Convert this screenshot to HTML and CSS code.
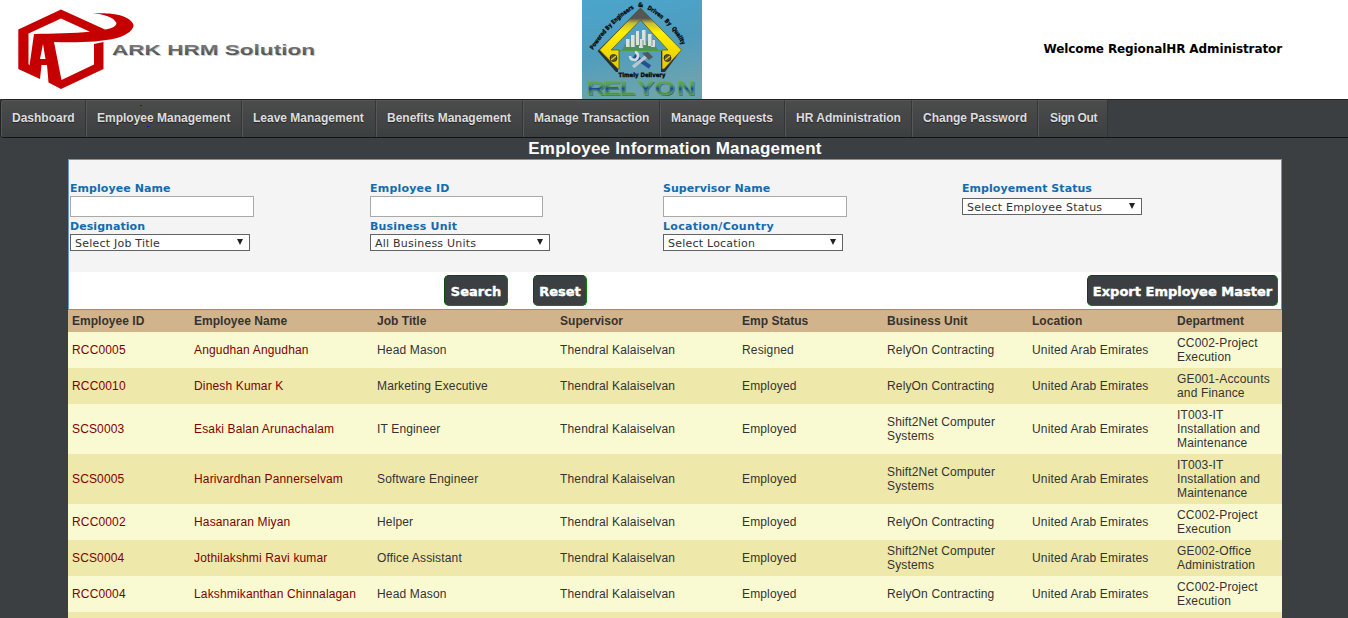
FILE: index.html
```html
<!DOCTYPE html>
<html lang="en">
<head>
<meta charset="utf-8">
<title>Employee Information Management</title>
<link rel="stylesheet" href="styles.css">
</head>
<body>
<header class="banner">
  <svg class="ark-logo" width="330" height="99" viewBox="0 0 330 99">
    <defs>
      <linearGradient id="metal" x1="0" y1="0" x2="0" y2="1"><stop offset="0" stop-color="#888"/><stop offset=".5" stop-color="#686868"/><stop offset="1" stop-color="#444"/></linearGradient>
    </defs>
    <path fill="#c60000" d="M61 9.5 18.3 29.5V69L40 79 41.5 65H47L48.5 82.500 61 89 103.500 69V42L94 44V64.500L61.500 80 54 42C75 42.500 99 42.500 117 38C128 35 134 29 133.500 25C131 15 110 12 93 13.500C103 14 114 17 116.500 23C116 27 110 29 105 29.500Z"/>
    <path fill="#fff" d="M61 18.500 90 31.800C74 33.500 52 33.500 34 34L29.500 65.500 28.500 64V33.500ZM43 44 45.500 59H40Z"/>
    <text class="ark-shadow" x="113" y="56" textLength="203" lengthAdjust="spacingAndGlyphs">ARK HRM Solution</text>
    <text class="ark-name" x="112" y="55" textLength="203" lengthAdjust="spacingAndGlyphs">ARK HRM Solution</text>
  </svg>
  <svg class="relyon-logo" width="120" height="99" viewBox="0 0 120 99">
    <defs>
      <linearGradient id="sky" x1="0" y1="0" x2=".25" y2="1"><stop offset="0" stop-color="#4ba5cc"/><stop offset=".55" stop-color="#4f9dbe"/><stop offset="1" stop-color="#6ca3af"/></linearGradient>
      <linearGradient id="yellow" x1="0" y1="0" x2="0" y2="1"><stop offset="0" stop-color="#555"/><stop offset=".17" stop-color="#555"/><stop offset=".25" stop-color="#c9bd31"/><stop offset=".4" stop-color="#fff000"/><stop offset="1" stop-color="#e5c900"/></linearGradient>
      <linearGradient id="letters" x1="0" y1="0" x2="0" y2="1"><stop offset="0" stop-color="#75b34b"/><stop offset=".35" stop-color="#4b9b67"/><stop offset=".5" stop-color="#184b93"/><stop offset=".65" stop-color="#3a8570"/><stop offset="1" stop-color="#75b34b"/></linearGradient>
      <path id="left-arc" d="M11 50Q28 23 54 7"/>
      <path id="right-arc" d="M65 9Q90 23 101 47"/>
    </defs>
    <rect width="120" height="99" fill="url(#sky)"/>
    <path d="M58.500 8 16.500 50 35 71H37V50H26L58.500 18 89 50H80V71H84L99.500 50Z" fill="#263039" transform="translate(-1 1)"/>
    <path d="M58.500 8 17.500 50 36 69H37V50H29L58.500 20 86 50H80V69H82L99.500 50Z" fill="url(#yellow)" stroke="#514e23" stroke-width=".7"/>
    <g fill="#5c5724" stroke="#222" stroke-width=".8"><circle cx="31.500" cy="58" r="3.500"/><circle cx="85.500" cy="58" r="3.500"/></g>
    <path d="M29 60 34 56M83 60 88 56" stroke="#e8cf28" stroke-width="1.300"/>
    <path fill="#4e9060" d="M45 41H71L76 50H40Z"/>
    <path fill="#d9e2dd" d="M44 39h4v8h-4zM49 35h4v12h-4zM54 31h3v14h-3zM60 30h4v15h-4zM66 34h4v12h-4zM69 40h4v7h-4zM57 39h4v9h-4z"/>
    <path stroke="#81938d" stroke-width="1" d="M48 39v8M53 35v12M57.500 31v15M64 30v14M70 34v12M61 40v7"/>
    <path d="M38 50.500H79" stroke="#519b45" stroke-width="1"/>
    <path d="M52 56 68 67" stroke="#245090" stroke-width="4"/><path d="M66 55 51 67" stroke="#bac7d0" stroke-width="3.500"/><path d="M60 53 66 52 71 57 67 60Z" fill="#4d5961"/><path d="M53 52A4 4 0 1 1 48 56" stroke="#d3dce0" stroke-width="2.500" fill="none"/>
    <g class="motto">
      <text><textPath href="#left-arc" textLength="59" lengthAdjust="spacingAndGlyphs">Powered By Engineers</textPath></text>
      <text x="56" y="7">&amp;</text>
      <text><textPath href="#right-arc" textLength="51" lengthAdjust="spacingAndGlyphs">Driven&#160; By&#160; Quality</textPath></text>
      <text x="36.500" y="76.500" textLength="47" lengthAdjust="spacingAndGlyphs">Timely Delivery</text>
    </g>
    <g transform="scale(1.3 1)">
      <text class="relyon-shadow" x="4.200 17 29.500 43 56.500 73.500" y="96.500">RELYON</text>
      <text class="relyon-name" x="3.500 16.300 28.800 42.300 55.800 72.800" y="95.500">RELYON</text>
    </g>
  </svg>
  <div class="welcome">Welcome RegionalHR Administrator</div>
</header>
<nav class="menu">
  <a class="w-dash">Dashboard</a><a class="w-emp">Employee Management</a><a class="w-leave">Leave Management</a><a class="w-ben">Benefits Management</a><a class="w-trans">Manage Transaction</a><a class="w-req">Manage Requests</a><a class="w-admin">HR Administration</a><a class="w-pass">Change Password</a><a class="w-out">Sign Out</a>
</nav>
<main class="content">
  <h1>Employee Information Management</h1>
  <section class="panel">
    <div class="filters">
      <div class="col"><label>Employee Name</label><input class="wide"><label>Designation</label><div class="select">Select Job Title<i></i></div></div>
      <div class="col unit"><label>Employee ID</label><input class="narrow"><label>Business Unit</label><div class="select">All Business Units<i></i></div></div>
      <div class="col place"><label>Supervisor Name</label><input class="wide"><label class="loose">Location/Country</label><div class="select">Select Location<i></i></div></div>
      <div class="col status"><label>Employement Status</label><div class="select">Select Employee Status<i></i></div></div>
    </div>
    <div class="actions"><button class="search">Search</button><button class="reset">Reset</button><button class="export">Export Employee Master</button></div>
  </section>
  <table class="staff">
    <colgroup><col class="c-id"><col class="c-name"><col class="c-job"><col class="c-super"><col class="c-mid"><col class="c-mid"><col class="c-mid"><col class="c-dept"></colgroup>
    <thead><tr><th>Employee ID</th><th>Employee Name</th><th>Job Title</th><th>Supervisor</th><th>Emp Status</th><th>Business Unit</th><th>Location</th><th>Department</th></tr></thead>
    <tbody>
      <tr><td>RCC0005</td><td>Angudhan Angudhan</td><td>Head Mason</td><td>Thendral Kalaiselvan</td><td>Resigned</td><td>RelyOn Contracting</td><td>United Arab Emirates</td><td>CC002-Project<br>Execution</td></tr>
      <tr><td>RCC0010</td><td>Dinesh Kumar K</td><td>Marketing Executive</td><td>Thendral Kalaiselvan</td><td>Employed</td><td>RelyOn Contracting</td><td>United Arab Emirates</td><td>GE001-Accounts<br>and Finance</td></tr>
      <tr class="tall"><td>SCS0003</td><td>Esaki Balan Arunachalam</td><td>IT Engineer</td><td>Thendral Kalaiselvan</td><td>Employed</td><td>Shift2Net Computer<br>Systems</td><td>United Arab Emirates</td><td>IT003-IT<br>Installation and<br>Maintenance</td></tr>
      <tr class="tall"><td>SCS0005</td><td>Harivardhan Pannerselvam</td><td>Software Engineer</td><td>Thendral Kalaiselvan</td><td>Employed</td><td>Shift2Net Computer<br>Systems</td><td>United Arab Emirates</td><td>IT003-IT<br>Installation and<br>Maintenance</td></tr>
      <tr><td>RCC0002</td><td>Hasanaran Miyan</td><td>Helper</td><td>Thendral Kalaiselvan</td><td>Employed</td><td>RelyOn Contracting</td><td>United Arab Emirates</td><td>CC002-Project<br>Execution</td></tr>
      <tr><td>SCS0004</td><td>Jothilakshmi Ravi kumar</td><td>Office Assistant</td><td>Thendral Kalaiselvan</td><td>Employed</td><td>Shift2Net Computer<br>Systems</td><td>United Arab Emirates</td><td>GE002-Office<br>Administration</td></tr>
      <tr><td>RCC0004</td><td>Lakshmikanthan Chinnalagan</td><td>Head Mason</td><td>Thendral Kalaiselvan</td><td>Employed</td><td>RelyOn Contracting</td><td>United Arab Emirates</td><td>CC002-Project<br>Execution</td></tr>
      <tr><td></td><td></td><td></td><td></td><td></td><td></td><td></td><td></td></tr>
    </tbody>
  </table>
</main>
</body>
</html>
```
FILE: styles.css
```css
* { box-sizing: border-box; }
body { margin: 0; height: 618px; overflow: hidden; background: #3c3f42; font-family: "Liberation Sans", Arial, sans-serif; color: #333; }
.banner { height: 99px; display: grid; grid-template-columns: 582px 120px 1fr; background: #fff; }
.banner svg { display: block; }
.ark-name, .ark-shadow { font: bold 15.5px "Liberation Sans", Arial, sans-serif; }
.ark-name { fill: url(#metal); }
.ark-shadow { fill: #ccc; }
.motto { font: bold 6px "DejaVu Sans", sans-serif; fill: #050505; stroke: #050505; stroke-width: .3; }
.relyon-name, .relyon-shadow { font: bold 20px "Liberation Sans", Arial, sans-serif; }
.relyon-name { fill: url(#letters); stroke: #75ae4f; stroke-width: .4; }
.relyon-shadow { fill: #3d657b; }
.welcome { padding: 41px 66px 0 0; text-align: right; font: bold 12px/16px "DejaVu Sans", sans-serif; letter-spacing: -.1px; color: #000; }
.menu { height: 39px; display: flex; border: 1px solid #222; border-bottom-color: #111416; border-right: 0; border-radius: 4px 0 0 4px; }
.menu a { height: 37px; padding-left: 10px; border-left: 1px solid #555859; border-right: 1px solid #333638; border-top: 1px solid #555; background: linear-gradient(#4b4c4b, #3c3f41); color: #ddd; font-size: 12px; font-weight: bold; line-height: 35px; white-space: nowrap; text-shadow: 0 1px 1px #222; }
.menu .w-emp { position: relative; }
.w-emp::before, .w-emp::after { content: ""; position: absolute; width: 2px; height: 1px; background: #1111cc; }
.w-emp::before { left: 53px; top: 4px; }
.w-emp::after { left: 60px; top: 25px; }
.w-dash { width: 85px; border-radius: 3px 0 0 3px; } .w-emp { width: 156px; } .w-leave { width: 134px; } .w-ben { width: 147px; } .w-trans { width: 137px; } .w-req { width: 125px; } .w-admin { width: 127px; } .w-pass { width: 126px; } .w-out { width: 70px; }
.menu .w-out { padding-left: 11px; letter-spacing: -.35px; }
.content { width: 1214px; margin-left: 68px; }
h1 { height: 21px; margin: 0; color: #fff; font-size: 17px; letter-spacing: .2px; line-height: 21px; text-align: center; }
.panel { height: 151px; border: 1px solid #649acb; background: #fff; }
.filters { height: 112px; padding: 22px 0 0 1px; display: grid; grid-template-columns: 300px 293px 299px 1fr; background: #f4f4f4; }
.col { display: flex; flex-direction: column; align-items: flex-start; }
.filters label { height: 14px; font: bold 11px/13px "DejaVu Sans", sans-serif; letter-spacing: .06px; color: #136bb0; }
.unit label { letter-spacing: .2px; }
.filters .loose { letter-spacing: .3px; }
.filters input { height: 21px; margin: 0 0 3px; padding: 0; border: 1px solid #a9a9a9; background: #fff; }
.wide { width: 184px; } .narrow { width: 173px; }
.select { width: 180px; height: 17px; padding: 0 6px 0 4px; display: flex; justify-content: space-between; border: 1px solid #626367; background: #fff; font: 11px/17px "DejaVu Sans", sans-serif; letter-spacing: .22px; color: #333; }
.select i { border: solid transparent; border-width: 6px 3px 0; border-top-color: #222; height: 0; margin-top: 4px; }
.status .select { margin-top: 2px; }
.actions { height: 37px; padding: 3px 3px 0 375px; display: flex; }
.actions button { height: 31px; padding: 1px 0 0; border: 1px solid #078007; border-top-color: #064b06; border-left-color: #064b06; border-radius: 5px; background: #3c3f42; color: #fff; font: bold 13px "DejaVu Sans", sans-serif; -webkit-text-stroke: .4px #fff; }
.search { width: 64px; } .actions .reset { width: 54px; margin-left: 25px; } .actions .export { width: 191px; margin-left: auto; }
.staff { width: 1214px; table-layout: fixed; border-collapse: collapse; font-size: 12px; line-height: 14px; letter-spacing: .15px; }
.c-id { width: 122px; } .c-name { width: 183px; } .c-job { width: 183px; } .c-super { width: 182px; } .c-mid { width: 145px; } .c-dept { width: 109px; }
.staff th { height: 22px; padding: 0 4px; background: #d2b48c; text-align: left; letter-spacing: .03px; }
.staff td { height: 36px; padding: 0 4px; white-space: nowrap; }
.staff .tall td { height: 50px; }
.staff tbody tr:nth-child(odd) { background: #fafad2; }
.staff tbody tr:nth-child(even) { background: #eee8aa; }
.staff td:nth-child(-n+2) { color: #800000; }
```
